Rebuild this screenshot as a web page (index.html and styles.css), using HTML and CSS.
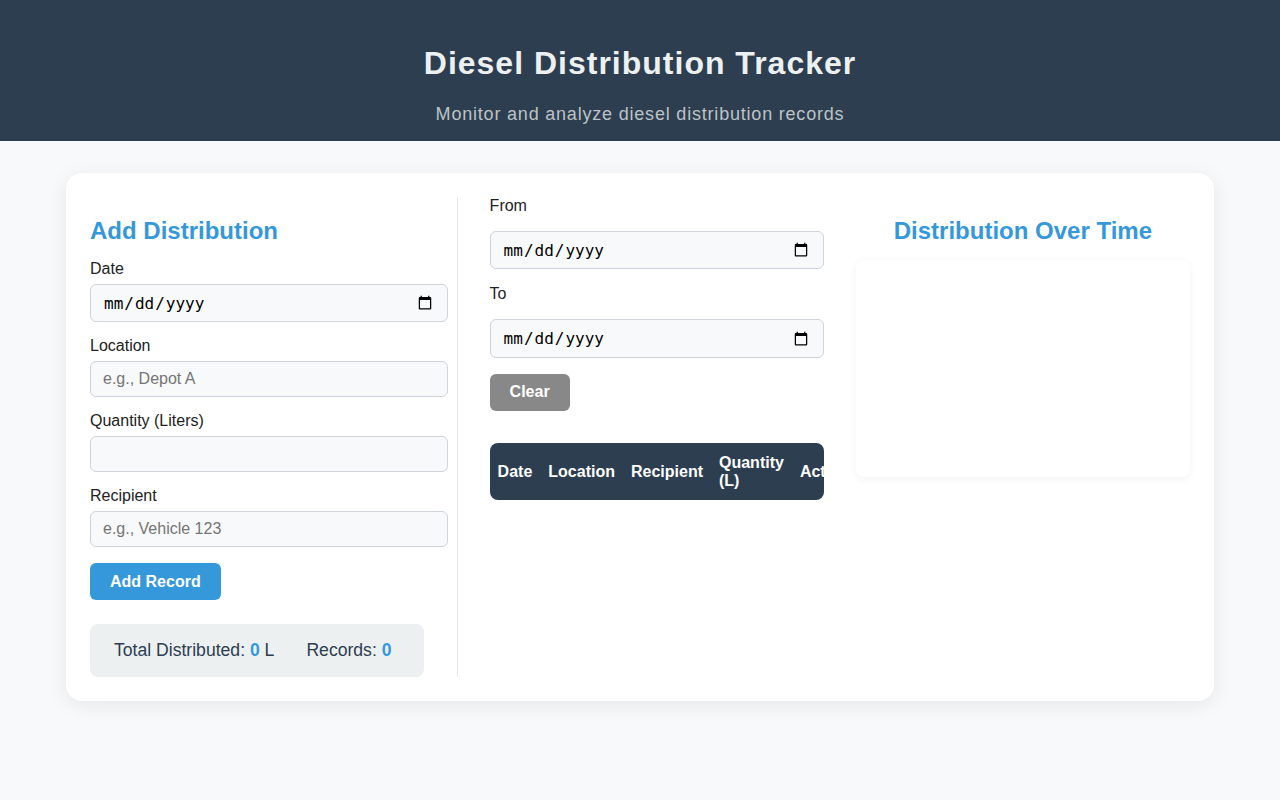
FILE: index.html
```html
<!DOCTYPE html>
<html lang="en">
<head>
    <meta charset="UTF-8">
    <meta name="viewport" content="width=device-width, initial-scale=1.0">
    <title>Diesel Distribution Tracker</title>
    <link rel="stylesheet" href="styles.css">
</head>
<body>
    <header class="top">
        <h1>Diesel Distribution Tracker</h1>
        <p>Monitor and analyze diesel distribution records</p>
    </header>

    <main class="card">
        <section class="form-panel">
            <h2>Add Distribution</h2>
            <form id="distForm">
                <label for="date">Date</label>
                <input type="date" id="date" class="date-input">

                <label for="location">Location</label>
                <input type="text" id="location" placeholder="e.g., Depot A">

                <label for="quantity">Quantity (Liters)</label>
                <input type="number" id="quantity">

                <label for="recipient">Recipient</label>
                <input type="text" id="recipient" placeholder="e.g., Vehicle 123">

                <button type="button" class="btn btn-primary">Add Record</button>
            </form>

            <div class="stats">
                <span>Total Distributed: <b id="total">0</b> L</span>
                <span>Records: <b id="count">0</b></span>
            </div>
        </section>

        <section class="records-panel">
            <div class="filters">
                <label for="fromDate">From</label>
                <input type="date" id="fromDate" class="date-input">
                <label for="toDate">To</label>
                <input type="date" id="toDate" class="date-input">
                <button type="button" class="btn btn-grey">Clear</button>
            </div>

            <div class="table-wrap">
                <table>
                    <thead>
                        <tr>
                            <th>Date</th>
                            <th>Location</th>
                            <th>Recipient</th>
                            <th>Quantity (L)</th>
                            <th>Actions</th>
                        </tr>
                    </thead>
                    <tbody id="records"></tbody>
                </table>
            </div>
        </section>

        <section class="chart-panel">
            <h2>Distribution Over Time</h2>
            <div class="chart-box"></div>
        </section>
    </main>
</body>
</html>
```

FILE: styles.css
```css
body {
    margin: 0;
    font-family: "Liberation Sans", Arial, sans-serif;
    background-color: #f8f9fa;
    color: #222;
}
.top {
    background-color: #2c3e50;
    text-align: center;
    padding: 45px 20px 16px;
}
.top h1 {
    margin: 0 0 22px;
    font-size: 32px;
    letter-spacing: 1px;
    color: #ecf0f1;
}
.top p {
    margin: 0;
    font-size: 18px;
    letter-spacing: 0.8px;
    color: #bdc3c7;
}
.card {
    max-width: 1100px;
    margin: 32px auto;
    padding: 24px;
    background-color: #fff;
    border-radius: 16px;
    box-shadow: 0 4px 20px rgba(0, 0, 0, 0.08);
    display: grid;
    grid-template-columns: minmax(0, 1.1fr) minmax(0, 1fr) minmax(0, 1fr);
    gap: 32px;
}
h2 {
    margin: 20px 0 15px;
    font-size: 24px;
    color: #3498db;
}
.form-panel {
    padding-right: 9px;
    border-right: 1px solid #e5e7eb;
}
label {
    display: block;
    font-size: 16px;
    margin-bottom: 6px;
}
input {
    display: block;
    box-sizing: border-box;
    width: 100%;
    padding: 8px 12px;
    margin-bottom: 15px;
    font-family: "Liberation Sans", Arial, sans-serif;
    font-size: 16px;
    background-color: #f8f9fa;
    border: 1px solid #ced4da;
    border-radius: 6px;
}
.date-input {
    height: 38.4px;
    font-family: "DejaVu Sans Mono", monospace;
}
.btn {
    padding: 9.5px 20px;
    font-family: inherit;
    font-size: 16px;
    font-weight: bold;
    color: #fff;
    border: none;
    border-radius: 6px;
    cursor: pointer;
}
.btn-primary {
    background-color: #3498db;
}
.btn-grey {
    background-color: #888;
}
#distForm .btn {
    margin-top: 1px;
}
.stats {
    display: inline-flex;
    margin-top: 24px;
    padding: 16px 0 16px 24px;
    background-color: #ecf0f1;
    border-radius: 8px;
    font-size: 17.6px;
    color: #2c3e50;
    white-space: nowrap;
}
.stats span {
    margin-right: 32px;
}
.stats b {
    color: #3498db;
}
.filters {
    display: flex;
    flex-direction: column;
    align-items: flex-start;
    gap: 16px;
}
.filters label,
.filters input {
    margin: 0;
}
.table-wrap {
    margin-top: 32px;
    border-radius: 8px;
    overflow: hidden;
}
table {
    width: 100%;
    border-collapse: collapse;
}
th {
    background-color: #2c3e50;
    color: #fff;
    text-align: left;
    font-size: 16px;
    padding: 10.8px 8px;
}
.chart-panel h2 {
    text-align: center;
}
.chart-box {
    height: 217px;
    background-color: #fff;
    border-radius: 8px;
    box-shadow: 0 2px 8px rgba(0, 0, 0, 0.05);
}
```
